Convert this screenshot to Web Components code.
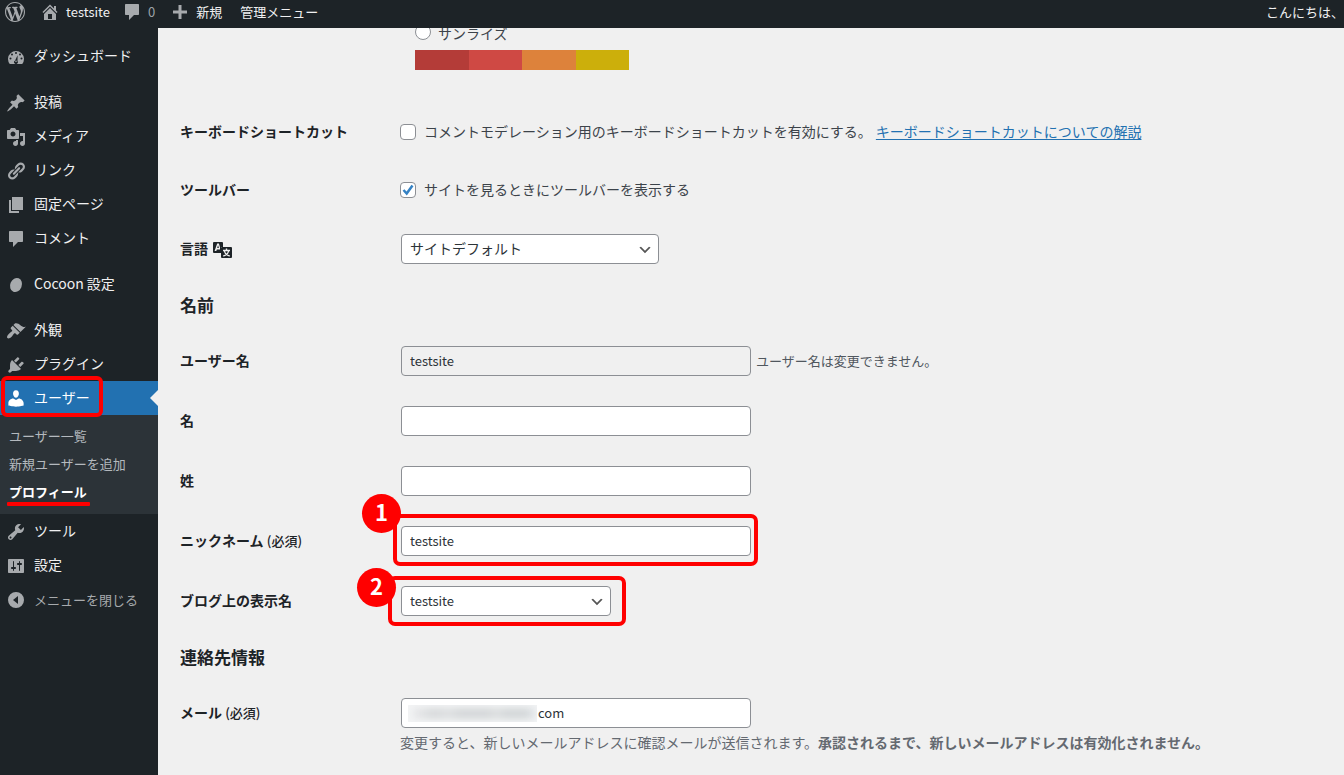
<!DOCTYPE html>
<html lang="ja">
<head>
<meta charset="utf-8">
<meta name="viewport" content="width=device-width, initial-scale=1">
<title>プロフィール</title>
<style>
  html, body { margin: 0; height: 100%; }
  body {
    background: #f0f0f0;
    color: #3c434a;
    font: 14px/22px "Noto Sans CJK JP", sans-serif;
    overflow: hidden;
  }
</style>
</head>
<body>
<admin-page></admin-page>

<script>
const ICONS = {
  wordpress: '<path d="M20 10c0-5.51-4.49-10-10-10C4.48 0 0 4.49 0 10c0 5.52 4.48 10 10 10 5.51 0 10-4.48 10-10zM7.78 15.37L4.37 6.22c.55-.02 1.17-.08 1.17-.08.5-.06.44-1.13-.06-1.11 0 0-1.45.11-2.37.11-.18 0-.37 0-.58-.01C4.12 2.69 6.87 1.11 10 1.11c2.33 0 4.45.87 6.05 2.34-.68-.11-1.65.39-1.65 1.58 0 .74.45 1.36.9 2.1.35.61.55 1.36.55 2.46 0 1.49-1.4 5-1.4 5l-3.03-8.37c.54-.02.82-.17.82-.17.5-.05.44-1.25-.06-1.22 0 0-1.44.12-2.38.12-.87 0-2.33-.12-2.33-.12-.5-.03-.56 1.2-.06 1.22l.92.08 1.26 3.41zM17.41 10c.24-.64.74-1.87.43-4.25.7 1.29 1.05 2.71 1.05 4.25 0 3.29-1.73 6.24-4.4 7.78.97-2.59 1.94-5.2 2.92-7.78zM6.1 18.09C3.12 16.65 1.11 13.53 1.11 10c0-1.3.23-2.48.72-3.59C3.25 10.3 4.67 14.2 6.1 18.09zm4.03-6.63l2.58 6.98c-.86.29-1.76.45-2.71.45-.79 0-1.57-.11-2.29-.33.81-2.38 1.62-4.74 2.42-7.1z"/>',
  home: '<path fill-rule="evenodd" d="M16 8.5l1.53 1.53-1.06 1.06L10 4.6l-6.47 6.49-1.06-1.06L10 2.47l4 4V4h2v4.5zm-6-2.46l6 5.99V18H4v-5.97zM12 17v-5H8v5h4z"/>',
  comment: '<path d="M4 2h12c.6 0 1 .4 1 1v9c0 .6-.4 1-1 1h-4l-5 5v-5H4c-.6 0-1-.4-1-1V3c0-.6.4-1 1-1z"/>',
  plus: '<path d="M17 8.5v3h-5.5V17h-3v-5.5H3v-3h5.500V3h3v5.500z"/>',
  dashboard: '<path fill-rule="evenodd" d="M3.760 17h12.480A8 8 0 1 0 3.760 17zM10 5a1 1 0 1 1 0 2 1 1 0 0 1 0-2zM6 6.500a1 1 0 1 1 0 2 1 1 0 0 1 0-2zM14 6.500a1 1 0 1 1 0 2 1 1 0 0 1 0-2zM4.500 10.500a1 1 0 1 1 0 2 1 1 0 0 1 0-2zM15.500 10.500a1 1 0 1 1 0 2 1 1 0 0 1 0-2zM11.600 8.200l-.1 5.800a1.900 1.900 0 1 1-2.400-.6z"/><circle cx="10" cy="14.300" r=".8"/>',
  post: '<path d="M10.44 3.02l1.82-1.82 6.36 6.35-1.83 1.82c-1.05-.68-2.48-.57-3.41.36l-.75.75c-.92.93-1.04 2.35-.35 3.41l-1.83 1.82-2.41-2.41-2.8 2.79c-.42.42-3.38 2.71-3.8 2.29s1.86-3.39 2.28-3.81l2.79-2.79L4.1 9.36l1.83-1.82c1.05.69 2.48.57 3.4-.36l.75-.75c.93-.92 1.05-2.35.36-3.41z"/>',
  media: '<path fill-rule="evenodd" d="M13 11V4c0-.55-.45-1-1-1h-1.67L9 1H5L3.67 3H2c-.55 0-1 .45-1 1v7c0 .55.45 1 1 1h10c.55 0 1-.45 1-1zM7 4.5c1.38 0 2.5 1.12 2.5 2.5S8.38 9.5 7 9.5 4.5 8.38 4.5 7 5.62 4.5 7 4.500zM14 6h5v10.5c0 1.38-1.12 2.5-2.5 2.500S14 17.88 14 16.5s1.12-2.5 2.5-2.5c.17 0 .34.02.5.05V9h-3V6zm-4 8.05V13h2v3.5c0 1.38-1.12 2.5-2.5 2.5S7 17.88 7 16.5 8.12 14 9.5 14c.17 0 .34.02.5.05z"/>',
  link: '<path d="M17.74 2.76c1.68 1.69 1.68 4.41 0 6.1l-1.53 1.52c-1.12 1.12-2.7 1.47-4.14 1.09l2.62-2.61.76-.77.76-.76c.84-.84.84-2.2 0-3.04-.84-.85-2.2-.85-3.04 0l-.77.76-3.38 3.38c-.37-1.44-.02-3.02 1.1-4.14l1.52-1.53c1.69-1.68 4.42-1.68 6.1 0zM8.59 13.43l5.34-5.34c.42-.42.42-1.1 0-1.52-.44-.43-1.13-.39-1.53 0l-5.33 5.34c-.42.42-.42 1.1 0 1.52.44.43 1.13.39 1.52 0zm-.76 2.29l4.14-4.15c.38 1.44.03 3.02-1.09 4.14l-1.52 1.53c-1.69 1.68-4.41 1.68-6.1 0-1.68-1.68-1.68-4.42 0-6.1l1.53-1.52c1.12-1.12 2.7-1.47 4.14-1.1l-4.14 4.15c-.85.84-.85 2.2 0 3.05.84.84 2.2.84 3.04 0z"/>',
  page: '<path d="M6 15V2h11v13H6zm-1 1h8v2H3V5h2v11z"/>',
  cocoon: '<ellipse cx="10" cy="10" rx="5.800" ry="7.200" transform="rotate(22 10 10)"/>',
  appearance: '<path d="M14.48 11.06L7.41 3.99l1.5-1.5c.5-.56 2.3-.47 3.51.32 1.21.8 1.43 1.28 2.91 2.1 1.18.64 2.45 1.26 4.45.85zm-.71.71L6.7 4.7 4.93 6.47c-.39.39-.39 1.02 0 1.41l1.06 1.06c.39.39.39 1.03 0 1.42-.6.6-1.43 1.11-2.21 1.69-.35.26-.7.53-1.01.84C1.43 14.23.4 16.08 1.4 17.07c.99 1 2.84-.03 4.18-1.36.31-.31.58-.66.85-1.02.57-.78 1.08-1.61 1.69-2.21.39-.39 1.02-.39 1.41 0l1.06 1.06c.39.39 1.02.39 1.41 0z"/>',
  plugin: '<path d="M13.11 4.36L9.87 7.6 8 5.73l3.24-3.24c.35-.34 1.05-.2 1.56.32.52.51.66 1.21.31 1.55zm-8 1.77l.91-1.12 9.01 9.01-1.19.84c-.71.71-2.63 1.16-3.82 1.16H6.14L4.9 17.26c-.59.59-1.54.59-2.12 0-.59-.58-.59-1.53 0-2.12l1.24-1.24v-3.88c0-1.13.4-3.19 1.09-3.89zm7.26 3.97l3.24-3.24c.34-.35 1.04-.21 1.55.31.52.51.66 1.21.31 1.55l-3.24 3.25z"/>',
  user: '<path d="M10 8.750c-2.270 0-2.900-3.440-2.900-3.440C6.800 3.300 7.700 1.200 9.970 1.200c2.300 0 3.150 2.100 2.880 4.110 0 0-.580 3.440-2.850 3.440zm0 2.250L12.720 9.500c2.600 0 4.900 2.330 4.900 4.530v2.490s-3.65 1.130-7.620 1.130c-3.970 0-7.620-1.130-7.620-1.130v-2.490c0-2.250 2.200-4.480 4.850-4.480z"/>',
  tool: '<path fill-rule="evenodd" d="M16.68 9.77c-1.34 1.34-3.3 1.67-4.95.99l-5.41 6.52c-.99.99-2.59.99-3.58 0s-.99-2.59 0-3.57l6.52-5.42c-.68-1.65-.35-3.61.99-4.95 1.28-1.28 3.12-1.62 4.72-1.06l-2.89 2.89 2.82 2.82 2.86-2.87c.53 1.58.18 3.39-1.08 4.65zM3.81 16.21c.4.39 1.04.39 1.43 0 .4-.4.4-1.04 0-1.43-.39-.4-1.03-.4-1.43 0-.39.39-.39 1.03 0 1.43z"/>',
  setting: '<path fill-rule="evenodd" d="M18 16V4c0-.55-.45-1-1-1H3c-.55 0-1 .45-1 1v12c0 .55.45 1 1 1h14c.55 0 1-.45 1-1zM8 11h1c.55 0 1 .45 1 1s-.45 1-1 1H8v1.5c0 .28-.22.5-.5.5s-.5-.22-.5-.5V13H6c-.55 0-1-.45-1-1s.45-1 1-1h1V5.5c0-.28.22-.5.5-.5s.5.22.5.5V11zm5-2h-1c-.55 0-1-.45-1-1s.45-1 1-1h1V5.5c0-.28.22-.5.5-.5s.5.22.5.5V7h1c.55 0 1 .45 1 1s-.45 1-1 1h-1v5.5c0 .28-.22.5-.5.5s-.5-.22-.5-.5V9z"/>',
  collapse: '<path fill-rule="evenodd" d="M10 2a8 8 0 1 0 0 16 8 8 0 0 0 0-16zm2 12l-5-4 5-4z"/>',
  translation: '<path fill-rule="evenodd" d="M2 4h8a1 1 0 0 1 1 1v4H9v6H2a1 1 0 0 1-1-1V5a1 1 0 0 1 1-1zM5.200 5.500L2.600 13h1.700l.5-1.600H8V9.300L6.900 5.500zM6.050 7.300l.85 2.700H5.200z"/><rect x="9" y="9" width="11" height="11" rx="1"/><g fill="none" stroke="#f0f0f0" stroke-width="1.400"><path d="M11 12.500h7M14.500 10.500v2M16.700 12.800c-.6 2.600-2.400 4.400-5.400 5.200M12.300 12.800c.6 2.600 2.400 4.400 5.400 5.200"/></g>'
};

const define = (name, html, setup) => {
  const template = document.createElement('template');
  template.innerHTML = html;
  customElements.define(name, class extends HTMLElement {
    constructor() {
      super();
      this.attachShadow({ mode: 'open' }).append(template.content.cloneNode(true));
    }
    connectedCallback() { if (setup) setup(this, this.shadowRoot); }
  });
};

define('wp-icon', `
  <style>
    :host { display: block; flex: none; width: 20px; height: 20px; }
    svg { display: block; width: 100%; height: 100%; fill: currentColor; }
  </style>
  <svg viewBox="0 0 20 20" aria-hidden="true"></svg>`,
  (host, root) => { root.querySelector('svg').innerHTML = ICONS[host.getAttribute('name')]; });

/* Link in the top bar: optional icon, then text */
define('bar-link', `
  <style>
    :host { display: block; flex: none; color: #f0f0f1; }
    a { display: flex; align-items: center; gap: 6px; height: 100%; color: inherit; text-decoration: none; white-space: nowrap; }
    wp-icon { color: #a7aaad; }
    wp-icon[hidden] { display: none; }
  </style>
  <a href="#"><wp-icon name="home"></wp-icon><slot></slot></a>`,
  (host, root) => {
    const icon = root.querySelector('wp-icon');
    if (host.hasAttribute('icon')) icon.shadowRoot.querySelector('svg').innerHTML = ICONS[host.getAttribute('icon')];
    else icon.hidden = true;
    if (host.hasAttribute('label')) root.querySelector('a').setAttribute('aria-label', host.getAttribute('label'));
  });

define('admin-bar', `
  <style>
    :host { display: block; background: #1d2327; font-size: 13px; line-height: 20px; overflow: hidden; }
    nav { display: flex; height: 24px; padding: 0 0 4px 5px; }
    .home { margin-left: 15px; }
    .comments { margin-left: 12px; color: #9ca2a7; }
    .new { margin-left: 15px; }
    .manage { margin-left: 18px; }
    .account { margin-left: auto; }
  </style>
  <nav aria-label="ツールバー">
    <bar-link icon="wordpress" label="WordPress"></bar-link>
    <bar-link class="home" icon="home">testsite</bar-link>
    <bar-link class="comments" icon="comment">0</bar-link>
    <bar-link class="new" icon="plus">新規</bar-link>
    <bar-link class="manage">管理メニュー</bar-link>
    <bar-link class="account">こんにちは、</bar-link>
  </nav>`);

define('menu-item', `
  <style>
    :host { display: block; position: relative; color: #f0f0f1; }
    :host([current]) { background: #2271b1; color: #fff; --icon: #fff; }
    a { display: flex; align-items: center; gap: 8px; height: 34px; padding-left: 6px; color: inherit; text-decoration: none; white-space: nowrap; }
    wp-icon { margin-top: 2px; color: var(--icon, #a7aaad); }
    span { padding-bottom: 2px; }
    :host([current])::after {
      content: ""; position: absolute; right: 0; top: 9px;
      border: 8px solid transparent; border-left: 0; border-right-color: #f0f0f0;
    }
    :host([marked])::before {
      content: ""; position: absolute; inset: -5px 55px -2px 1px;
      border: 4px solid #f00; border-radius: 6px;
    }
  </style>
  <a href="#"><wp-icon name="post"></wp-icon><span><slot></slot></span></a>`,
  (host, root) => {
    root.querySelector('wp-icon').shadowRoot.querySelector('svg').innerHTML = ICONS[host.getAttribute('icon')];
  });

define('sub-menu', `
  <style>
    :host { display: block; background: #2c3338; padding: 7px 0 8px; font-size: 13px; }
    ::slotted(a) { display: block; width: fit-content; margin-left: 9px; line-height: 28px; color: #b4b9be; text-decoration: none; white-space: nowrap; }
    ::slotted(a[aria-current]) { position: relative; color: #fff; font-weight: 600; }
  </style>
  <slot></slot>`);

define('admin-menu', `
  <style>
    :host { display: block; flex: none; width: 158px; background: #1d2327; }
    nav { padding-top: 11px; }
    section { margin-bottom: 12px; }
    a[aria-current]::after {
      content: ""; position: absolute; left: -2px; right: -3px; bottom: 0; height: 4px;
      background: #f00; border-radius: 1px;
    }
    button {
      display: flex; align-items: center; gap: 8px; width: 100%; height: 34px;
      padding: 2px 0 0 6px; border: 0; background: none; color: #a7aaad;
      font-family: inherit; font-size: 13px; line-height: 22px; white-space: nowrap;
    }
  </style>
  <nav aria-label="メインメニュー">
    <section><menu-item icon="dashboard">ダッシュボード</menu-item></section>
    <section>
      <menu-item icon="post">投稿</menu-item>
      <menu-item icon="media">メディア</menu-item>
      <menu-item icon="link">リンク</menu-item>
      <menu-item icon="page">固定ページ</menu-item>
      <menu-item icon="comment">コメント</menu-item>
    </section>
    <section><menu-item icon="cocoon">Cocoon 設定</menu-item></section>
    <section>
      <menu-item icon="appearance">外観</menu-item>
      <menu-item icon="plugin">プラグイン</menu-item>
      <menu-item icon="user" current marked>ユーザー</menu-item>
      <sub-menu>
        <a href="#">ユーザー一覧</a>
        <a href="#">新規ユーザーを追加</a>
        <a href="#" aria-current="page">プロフィール</a>
      </sub-menu>
      <menu-item icon="tool">ツール</menu-item>
      <menu-item icon="setting">設定</menu-item>
      <button type="button"><wp-icon name="collapse"></wp-icon>メニューを閉じる</button>
    </section>
  </nav>`);

/* One form row: label column and control column */
define('form-row', `
  <style>
    :host { display: grid; grid-template-columns: 220px minmax(0, 1fr); }
    .label { display: flex; align-items: center; gap: 4px; height: 30px; padding: 14px 0 16px; color: #1d2327; font-weight: 600; }
    .field { padding: 15px 0; }
    .control { display: flex; align-items: center; min-height: 30px; }
    :host([compact]) .label { padding: 13px 0 15px; }
    :host([compact]) .field { padding: 14px 0; }
  </style>
  <div class="label"><slot name="label"></slot></div>
  <div class="field">
    <div class="control"><slot></slot></div>
    <slot name="help"></slot>
  </div>`);

/* Numbered red frame round the slotted control */
define('step-mark', `
  <style>
    :host { display: block; position: relative; flex: none; }
    .frame { position: absolute; inset: var(--frame); border: 4px solid #f00; border-radius: 7px; pointer-events: none; }
    .badge {
      position: absolute; left: -35px; top: var(--badge-top); width: 39px; height: 39px; border-radius: 50%;
      background: #f00; color: #fff; font-size: 22px; font-weight: 700; line-height: 34px; text-align: center;
    }
  </style>
  <slot></slot>
  <div class="frame"><span class="badge"></span></div>`,
  (host, root) => { root.querySelector('.badge').textContent = host.getAttribute('number'); });

/* Text box whose leading characters are hidden by a soft smear */
define('masked-field', `
  <style>
    :host { display: block; position: relative; }
    .mask {
      position: absolute; left: 7px; top: 7px; width: 129px; height: 17px; overflow: hidden; background: #f3f4f5;
    }
    .mask::before {
      content: ""; position: absolute; inset: 4px 2px 4px 6px; filter: blur(4px);
      background: linear-gradient(90deg, #dfe0e2 0 8%, #d2d4d6 12% 22%, #dadcde 28%, #cdd0d2 38% 62%, #d9dbdc 68%, #cbcfd1 76% 92%, #dbe1e6);
    }
  </style>
  <slot></slot><span class="mask"></span>`);

define('color-scheme', `
  <style>
    :host { display: block; width: 214px; padding-bottom: 33px; }
    label { display: flex; align-items: center; gap: 7px; height: 22px; }
    input { appearance: none; box-sizing: border-box; width: 16px; height: 16px; margin: 0 0 2px; border: 1px solid #8c8f94; border-radius: 50%; background: #fff; }
    .colors { display: flex; height: 20px; margin-top: 6px; }
    i { flex: 1; }
  </style>
  <label><input type="radio" name="scheme">サンライズ</label>
  <div class="colors"><i style="background:#b43c38"></i><i style="background:#cf4944"></i><i style="background:#dd823b"></i><i style="background:#ccaf0b"></i></div>`);

define('profile-form', `
  <style>
    :host { display: block; flex: 1; min-width: 0; overflow: hidden; }
    form { margin-top: -6px; padding-left: 22px; }
    color-scheme { margin-left: 235px; }
    h2 { margin: 0; color: #1d2327; font-size: 17px; line-height: 52px; font-weight: 600; }
    a { color: #2271b1; text-underline-offset: 2px; }
    .control-text { padding-bottom: 2px; }
    small { font-size: 13px; font-weight: 500; }
    .check { display: flex; align-items: center; gap: 8px; margin-right: 4px; }
    input, select {
      appearance: none; box-sizing: border-box; height: 30px; margin: 0; border: 1px solid #8c8f94; border-radius: 4px;
      background: #fff; color: #2c3338; font: inherit;
    }
    input.text { display: block; width: 350px; padding: 0 8px 2px; font-size: 13px; }
    .at { margin-left: 1px; }
    input:disabled { background: transparent; }
    input[type=checkbox] { width: 16px; height: 16px; }
    input:checked { background: #fff url("data:image/svg+xml,%3Csvg xmlns='http://www.w3.org/2000/svg' viewBox='0 0 14 14'%3E%3Cpath d='M2.500 7l3.200 3.500 5.800-8' fill='none' stroke='%233582c4' stroke-width='2.500'/%3E%3C/svg%3E") center / 14px no-repeat; }
    select {
      display: block; padding: 0 24px 0 8px;
      background: #fff url("data:image/svg+xml,%3Csvg xmlns='http://www.w3.org/2000/svg' viewBox='0 0 20 20'%3E%3Cpath d='M5 6l5 5 5-5 2 1-7 7-7-7 2-1z' fill='%23555'/%3E%3C/svg%3E") right 5px top 55% / 16px 16px no-repeat;
    }
    #locale { width: 258px; padding-bottom: 2px; }
    #display { width: 210px; font-size: 13px; }
    #email { padding-left: 136px; }
    .note { margin-left: 5px; font-size: 13px; color: #50575e; }
    p { margin: 3px 0 0; color: #646970; }
    .nickname { --frame: -12px -7px -10px -8px; --badge-top: -24px; }
    .display { --frame: -10px -15px -10px -13px; --badge-top: -12px; }
  </style>
  <form>
    <color-scheme></color-scheme>
    <form-row compact>
      <span slot="label">キーボードショートカット</span>
      <label class="check"><input type="checkbox"><span class="control-text">コメントモデレーション用のキーボードショートカットを有効にする。</span></label>
      <a href="#" class="control-text">キーボードショートカットについての解説</a>
    </form-row>
    <form-row compact>
      <span slot="label">ツールバー</span>
      <label class="check"><input type="checkbox" checked><span class="control-text">サイトを見るときにツールバーを表示する</span></label>
    </form-row>
    <form-row>
      <label slot="label" for="locale">言語</label><wp-icon slot="label" name="translation"></wp-icon>
      <select id="locale" class="at"><option>サイトデフォルト</option></select>
    </form-row>
    <h2>名前</h2>
    <form-row>
      <label slot="label" for="login">ユーザー名</label>
      <input id="login" class="text at" value="testsite" disabled><span class="note">ユーザー名は変更できません。</span>
    </form-row>
    <form-row>
      <label slot="label" for="first">名</label>
      <input id="first" class="text at">
    </form-row>
    <form-row>
      <label slot="label" for="last">姓</label>
      <input id="last" class="text at">
    </form-row>
    <form-row>
      <label slot="label" for="nick">ニックネーム <small>(必須)</small></label>
      <step-mark class="nickname at" number="1"><input id="nick" class="text" value="testsite"></step-mark>
    </form-row>
    <form-row>
      <label slot="label" for="display">ブログ上の表示名</label>
      <step-mark class="display at" number="2"><select id="display"><option>testsite</option></select></step-mark>
    </form-row>
    <h2>連絡先情報</h2>
    <form-row>
      <label slot="label" for="email">メール <small>(必須)</small></label>
      <masked-field class="at"><input id="email" class="text" value="com"></masked-field>
      <p slot="help">変更すると、新しいメールアドレスに確認メールが送信されます。<b>承認されるまで、新しいメールアドレスは有効化されません。</b></p>
    </form-row>
  </form>`);

define('admin-page', `
  <style>
    :host { display: flex; flex-direction: column; height: 100vh; }
    .body { display: flex; flex: 1; min-height: 0; }
  </style>
  <admin-bar></admin-bar>
  <div class="body"><admin-menu></admin-menu><profile-form></profile-form></div>`);
</script>
</body>
</html>
